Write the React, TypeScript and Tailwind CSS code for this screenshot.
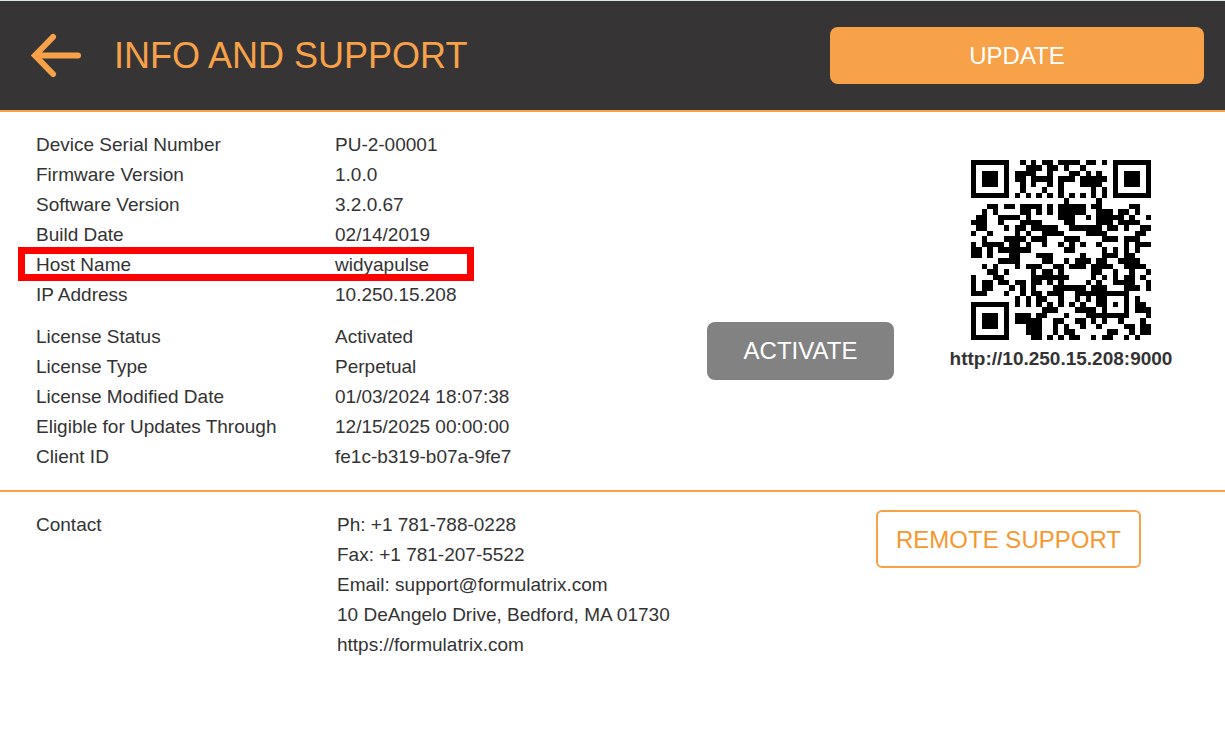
import React, { useMemo } from "react";
import { clsx } from "clsx";

const DEVICE_URL = "http://10.250.15.208:9000";

interface InfoItem {
  label: string;
  value: string;
  highlighted?: boolean;
}

const deviceInfo: InfoItem[] = [
  { label: "Device Serial Number", value: "PU-2-00001" },
  { label: "Firmware Version", value: "1.0.0" },
  { label: "Software Version", value: "3.2.0.67" },
  { label: "Build Date", value: "02/14/2019" },
  { label: "Host Name", value: "widyapulse", highlighted: true },
  { label: "IP Address", value: "10.250.15.208" },
];

const licenseInfo: InfoItem[] = [
  { label: "License Status", value: "Activated" },
  { label: "License Type", value: "Perpetual" },
  { label: "License Modified Date", value: "01/03/2024 18:07:38" },
  { label: "Eligible for Updates Through", value: "12/15/2025 00:00:00" },
  { label: "Client ID", value: "fe1c-b319-b07a-9fe7" },
];

// QR code, version 4 with level H correction: 4 blocks of 9 data + 16 ecc bytes
const QR_SIZE = 33;
const QR_BLOCKS = 4;
const QR_DATA = 9;
const QR_ECC = 16;
const QR_FORMAT = "000110100001100"; // level H, mask 6

function gfMul(a: number, b: number) {
  let r = 0;
  for (let i = 7; i >= 0; i--) {
    r = (r << 1) ^ ((r >> 7) * 0x11d);
    r ^= ((b >> i) & 1) * a;
  }
  return r;
}

function eccBytes(data: number[]) {
  const gen: number[] = new Array(QR_ECC).fill(0);
  gen[QR_ECC - 1] = 1;
  let root = 1;
  for (let i = 0; i < QR_ECC; i++) {
    for (let j = 0; j < QR_ECC; j++) {
      gen[j] = gfMul(gen[j], root);
      if (j + 1 < QR_ECC) gen[j] ^= gen[j + 1];
    }
    root = gfMul(root, 2);
  }
  const rem: number[] = new Array(QR_ECC).fill(0);
  for (const b of data) {
    const factor = b ^ rem.shift()!;
    rem.push(0);
    gen.forEach((g, i) => (rem[i] ^= gfMul(g, factor)));
  }
  return rem;
}

function encodeBits(text: string) {
  let bits = "0100" + text.length.toString(2).padStart(8, "0");
  for (const ch of text) bits += ch.charCodeAt(0).toString(2).padStart(8, "0");
  bits += "0000";
  const bytes = (bits.match(/.{8}/g) ?? []).map((b) => parseInt(b, 2));
  for (let pad = 0xec; bytes.length < QR_BLOCKS * QR_DATA; pad ^= 0xec ^ 0x11) bytes.push(pad);

  const blocks = Array.from({ length: QR_BLOCKS }, (_, i) => bytes.slice(i * QR_DATA, (i + 1) * QR_DATA));
  const eccs = blocks.map(eccBytes);
  const out: number[] = [];
  for (let i = 0; i < QR_DATA; i++) blocks.forEach((b) => out.push(b[i]));
  for (let i = 0; i < QR_ECC; i++) eccs.forEach((e) => out.push(e[i]));
  return out.map((b) => b.toString(2).padStart(8, "0")).join("");
}

function buildQr(text: string) {
  const n = QR_SIZE;
  const grid: (boolean | null)[][] = Array.from({ length: n }, () => new Array(n).fill(null));

  // Finder patterns with their white separators
  for (const [cr, cc] of [[3, 3], [3, n - 4], [n - 4, 3]]) {
    for (let dr = -4; dr <= 4; dr++) {
      for (let dc = -4; dc <= 4; dc++) {
        const r = cr + dr;
        const c = cc + dc;
        if (r < 0 || c < 0 || r >= n || c >= n) continue;
        const d = Math.max(Math.abs(dr), Math.abs(dc));
        grid[r][c] = d !== 2 && d !== 4;
      }
    }
  }

  // Alignment and timing patterns
  for (let dr = -2; dr <= 2; dr++) {
    for (let dc = -2; dc <= 2; dc++) {
      grid[26 + dr][26 + dc] = Math.max(Math.abs(dr), Math.abs(dc)) !== 1;
    }
  }
  for (let i = 8; i < n - 8; i++) {
    grid[6][i] = i % 2 === 0;
    grid[i][6] = i % 2 === 0;
  }

  // Format bits, both copies
  [...QR_FORMAT].forEach((bit, i) => {
    const on = bit === "1";
    if (i < 8) grid[8][i < 6 ? i : i + 1] = on;
    else grid[i === 8 ? 7 : 14 - i][8] = on;
    if (i < 7) grid[n - 1 - i][8] = on;
    else grid[8][n - 15 + i] = on;
  });
  grid[n - 8][8] = true;

  // Data, in two-column strips from the right edge
  const bits = encodeBits(text);
  let k = 0;
  let up = true;
  for (let right = n - 1; right > 0; right -= 2) {
    if (right === 6) right = 5;
    for (let i = 0; i < n; i++) {
      const r = up ? n - 1 - i : i;
      for (const c of [right, right - 1]) {
        if (grid[r][c] !== null) continue;
        const mask = (((r * c) % 2) + ((r * c) % 3)) % 2 === 0;
        grid[r][c] = (bits[k++] === "1") !== mask;
      }
    }
    up = !up;
  }
  return grid;
}

function QrCode({ text }: { text: string }) {
  const path = useMemo(
    () =>
      buildQr(text)
        .flatMap((row, r) => row.map((on, c) => (on ? `M${c} ${r}h1v1h-1z` : "")))
        .join(""),
    [text]
  );

  return (
    <svg
      className="w-[180px] h-[180px]"
      viewBox={`0 0 ${QR_SIZE} ${QR_SIZE}`}
      shapeRendering="crispEdges"
      role="img"
      aria-label={text}
    >
      <path d={path} fill="#000" />
    </svg>
  );
}

function InfoList({ items }: { items: InfoItem[] }) {
  return (
    <dl>
      {items.map(({ label, value, highlighted }) => (
        <div key={label} className={clsx("flex", highlighted && "relative")}>
          <dt className="w-[299px] shrink-0">{label}</dt>
          <dd>{value}</dd>
          {highlighted && (
            <span className="absolute -top-[3px] -bottom-px -left-[18px] w-[456px] border-7 border-[#ff0000] pointer-events-none" />
          )}
        </div>
      ))}
    </dl>
  );
}

export default function App() {
  return (
    <div className="min-h-screen bg-white font-['Liberation_Sans',Arial,sans-serif] text-[19px] leading-[30px] text-[#333333]">
      <header className="flex items-center justify-between border-t border-b-2 border-t-[#dce6e0] border-b-[#f7a248] bg-[#373435] py-[26px] pl-[30px] pr-[21px]">
        <div className="flex items-center gap-8">
          <button type="button" aria-label="Back">
            <svg className="w-[52px] h-[47px]" viewBox="0 0 52 47" fill="none" stroke="#f7a248" strokeWidth="6" strokeLinecap="round" strokeLinejoin="miter">
              <path d="M23 5 5 23.5 23 42" />
              <path d="M8 23.5H48" />
            </svg>
          </button>
          <h1 className="text-4xl text-[#f7a248]">INFO AND SUPPORT</h1>
        </div>
        <button type="button" className="h-[57px] w-[374px] rounded-lg bg-[#f7a248] text-2xl text-white">
          UPDATE
        </button>
      </header>

      <main>
        <section className="flex items-start gap-[55px] border-b-2 border-[#f7a248] py-[18px] pl-9 pr-[52px]">
          <div className="flex flex-1 flex-col gap-3">
            <InfoList items={deviceInfo} />
            <div className="flex items-start justify-between">
              <InfoList items={licenseInfo} />
              <button type="button" className="h-[58px] w-[187px] rounded-lg bg-[#828282] text-2xl text-white">
                ACTIVATE
              </button>
            </div>
          </div>
          <div className="flex w-[224px] flex-col items-center gap-1 pt-[30px]">
            <QrCode text={DEVICE_URL} />
            <p className="font-bold whitespace-nowrap">{DEVICE_URL}</p>
          </div>
        </section>

        <section className="flex items-start justify-between pt-[18px] pl-9 pr-[84px]">
          <div className="flex">
            <h2 className="w-[301px] shrink-0">Contact</h2>
            <address className="not-italic">
              <p>Ph: +1 781-788-0228</p>
              <p>Fax: +1 781-207-5522</p>
              <p>
                Email: <a href="mailto:support@formulatrix.com">support@formulatrix.com</a>
              </p>
              <p>10 DeAngelo Drive, Bedford, MA 01730</p>
              <p>
                <a href="https://formulatrix.com">https://formulatrix.com</a>
              </p>
            </address>
          </div>
          <button type="button" className="h-[58px] w-[265px] rounded-md border-2 border-[#f7a248] pt-0.5 text-2xl text-[#f7982f]">
            REMOTE SUPPORT
          </button>
        </section>
      </main>
    </div>
  );
}
